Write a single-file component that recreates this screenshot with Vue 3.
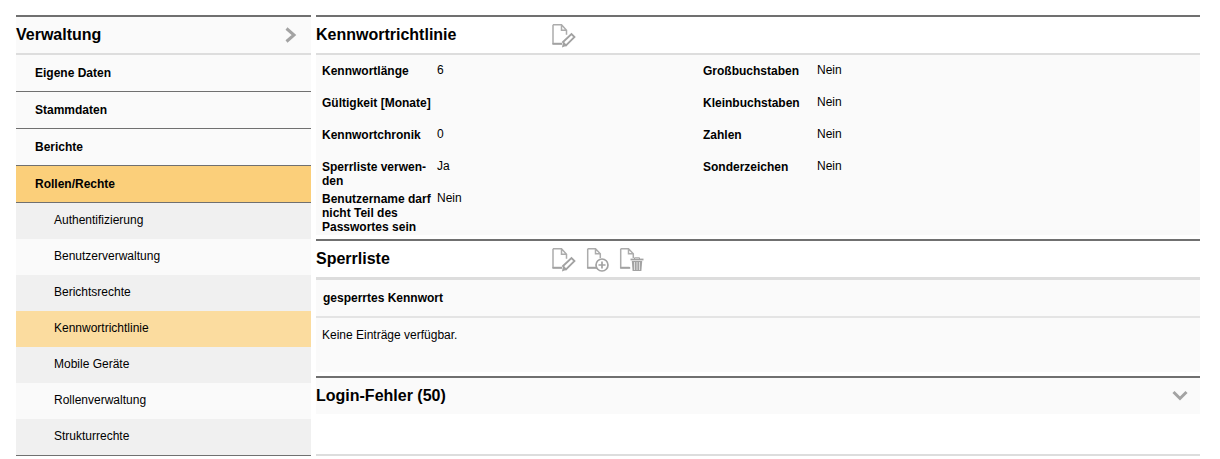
<script setup>
const mainItems = ['Eigene Daten', 'Stammdaten', 'Berichte']
const subItems = [
  { label: 'Authentifizierung', tone: 'grey' },
  { label: 'Benutzerverwaltung', tone: 'light' },
  { label: 'Berichtsrechte', tone: 'grey' },
  { label: 'Kennwortrichtlinie', tone: 'sel' },
  { label: 'Mobile Geräte', tone: 'grey' },
  { label: 'Rollenverwaltung', tone: 'light' },
  { label: 'Strukturrechte', tone: 'grey' }
]
const left = [
  { k: 'Kennwortlänge', v: '6' },
  { k: 'Gültigkeit [Monate]', v: '' },
  { k: 'Kennwortchronik', v: '0' },
  { k: 'Sperrliste verwen-\nden', v: 'Ja' },
  { k: 'Benutzername darf nicht Teil des Passwortes sein', v: 'Nein' }
]
const right = [
  { k: 'Großbuchstaben', v: 'Nein' },
  { k: 'Kleinbuchstaben', v: 'Nein' },
  { k: 'Zahlen', v: 'Nein' },
  { k: 'Sonderzeichen', v: 'Nein' }
]
</script>

<template>
  <div class="page">
    <aside class="side">
      <div class="side-head">
        <span>Verwaltung</span>
        <svg class="chev" width="14" height="16" viewBox="0 0 14 16"><path d="M2.500 1.500l7.500 6.500-7.500 6.500" fill="none" stroke="#a3a3a3" stroke-width="3"/></svg>
      </div>
      <div v-for="m in mainItems" :key="m" class="main-item">{{ m }}</div>
      <div class="main-item active">Rollen/Rechte</div>
      <div v-for="s in subItems" :key="s.label" class="sub-item" :class="s.tone">{{ s.label }}</div>
      <div class="side-end"></div>
    </aside>

    <main class="content">
      <section class="policy">
        <header class="head">
          <h2>Kennwortrichtlinie</h2>
          <div class="tools">
            <svg class="ico" width="26" height="26" viewBox="0 0 26 26"><use href="#doc" /><use href="#pen" /></svg>
          </div>
        </header>
        <div class="policy-body">
          <div class="col">
            <div v-for="r in left" :key="r.k" class="row">
              <div class="k">{{ r.k }}</div>
              <div class="v">{{ r.v }}</div>
            </div>
          </div>
          <div class="col col-right">
            <div v-for="r in right" :key="r.k" class="row">
              <div class="k">{{ r.k }}</div>
              <div class="v">{{ r.v }}</div>
            </div>
          </div>
        </div>
      </section>

      <section class="blocked">
        <header class="head head-thick">
          <h2>Sperrliste</h2>
          <div class="tools">
            <svg class="ico" width="26" height="26" viewBox="0 0 26 26"><use href="#doc" /><use href="#pen" /></svg>
            <svg class="ico" width="26" height="26" viewBox="0 0 26 26"><g transform="translate(1 0)"><use href="#doc2" /></g><circle cx="17" cy="19" r="6" fill="#fff" stroke="#a2a2a2" stroke-width="1.700"/><path d="M17 15.500v7M13.500 19h7" stroke="#a2a2a2" stroke-width="1.700"/></svg>
            <svg class="ico" width="26" height="26" viewBox="0 0 26 26"><use href="#doc2" /><path d="M11.500 13.500h13" stroke="#a2a2a2" stroke-width="1.800"/><path d="M15.500 13v-1.200h5V13" fill="none" stroke="#a2a2a2" stroke-width="1"/><path d="M12.800 15h10.400l-.8 10h-8.800z" fill="#a2a2a2"/><path d="M15.500 16v8M18 16v8M20.500 16v8" stroke="#e4e4e4" stroke-width=".9"/></svg>
          </div>
        </header>
        <div class="table-head">gesperrtes Kennwort</div>
        <div class="table-empty">Keine Einträge verfügbar.</div>
      </section>

      <section class="errors">
        <header class="head-errors">
          <h2>Login-Fehler (50)</h2>
          <svg class="chev" width="16" height="12" viewBox="0 0 16 12"><path d="M1.500 2l6.500 6.500 6.500-6.500" fill="none" stroke="#a3a3a3" stroke-width="3"/></svg>
        </header>
        <div class="errors-end"></div>
      </section>
    </main>

    <svg width="0" height="0" class="defs">
      <defs>
        <g id="doc"><path d="M2 2.700h8.500l5 5.500v4.500M2 2.700V21.500h9M10.500 2.700v5.500h5" fill="none" stroke="#acacac" stroke-width="1.500"/><path d="M1.500 21h9.500v1.800H1.500z" fill="#a2a2a2"/></g>
        <g id="pen"><path d="M12 20l8.500-8 3 3-8.500 8.500z" fill="#fff" stroke="#a2a2a2" stroke-width="1.800"/><path d="M11 25.500l1-5.500 3.500 3.700z" fill="#a2a2a2"/></g>
        <g id="doc2"><path d="M1.700 2.700h7.800l4.800 5v4.300M1.700 2.700V21.500h8.800M9.500 2.700v5h4.800" fill="none" stroke="#acacac" stroke-width="1.500"/><path d="M1.200 21h10v1.800h-10z" fill="#a2a2a2"/></g>
      </defs>
    </svg>
  </div>
</template>

<style scoped>
.page {
  width: 1220px;
  height: 459px;
  box-sizing: border-box;
  padding: 15px 20px 0 16px;
  display: flex;
  gap: 5px;
  align-items: flex-start;
  background: #fff;
  color: #000;
  font-family: "Liberation Sans", Arial, sans-serif;
  font-size: 12px;
  overflow: hidden;
}
.defs { position: absolute; }
.side { width: 295px; flex: none; }
.side-head {
  height: 36px;
  border-top: 2px solid #707070;
  border-bottom: 2px solid #ddd;
  background: #fafafa;
  display: flex;
  align-items: center;
  justify-content: space-between;
  font-size: 16px;
  font-weight: bold;
  padding-right: 13px;
}
.main-item {
  height: 36px;
  line-height: 36px;
  border-bottom: 1px solid #707070;
  background: #fafafa;
  padding-left: 19px;
  font-weight: bold;
}
.main-item.active { background: #fbcf7a; }
.sub-item { height: 36px; line-height: 35px; padding-left: 38px; }
.sub-item.grey { background: #f0f0f0; }
.sub-item.light { background: #fafafa; }
.sub-item.sel { background: #fbdc9f; }
.side-end { border-top: 1px solid #707070; }
.content { width: 884px; flex: none; }
.head {
  height: 36px;
  border-top: 2px solid #707070;
  border-bottom: 2px solid #ddd;
  display: flex;
  align-items: center;
}
.head h2, .head-errors h2 {
  margin: 0;
  font-size: 16px;
  font-weight: bold;
  width: 235px;
}
.tools { display: flex; gap: 8px; }
.ico { display: block; }
.policy-body {
  height: 180px;
  background: #fafafa;
  display: flex;
  padding: 8px 0 0 6px;
  box-sizing: border-box;
}
.col { width: 381px; }
.row { display: flex; min-height: 32px; }
.k {
  width: 115px;
  flex: none;
  font-weight: bold;
  line-height: 14px;
  padding-top: 1px;
  white-space: pre-line;
}
.col-right .k { width: 114px; }
.v { line-height: 14px; }
.policy { height: 224px; }
.blocked { height: 137px; }
.head-thick { border-bottom-width: 3px; }
.table-head {
  height: 38px;
  line-height: 36px;
  box-sizing: border-box;
  border-bottom: 2px solid #e4e4e4;
  background: #fafafa;
  padding-left: 7px;
  font-weight: bold;
}
.table-empty {
  height: 54px;
  background: #fafafa;
  padding: 10px 0 0 6px;
  box-sizing: border-box;
  line-height: 14px;
}
.errors { border-top: 2px solid #707070; }
.head-errors {
  height: 36px;
  background: #fafafa;
  display: flex;
  align-items: center;
  justify-content: space-between;
  padding-right: 12px;
}
.head-errors h2 { width: auto; }
.errors-end { margin-top: 40px; border-top: 2px solid #ddd; }
</style>
